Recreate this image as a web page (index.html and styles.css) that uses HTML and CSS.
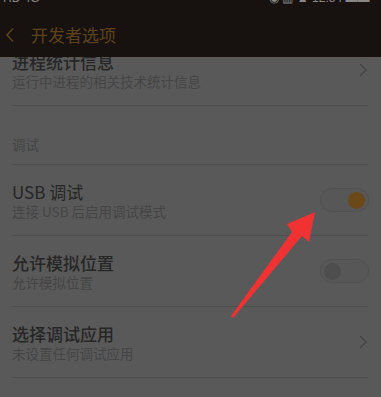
FILE: index.html
```html
<!DOCTYPE html>
<html lang="zh">
<head>
<meta charset="utf-8">
<link rel="stylesheet" href="styles.css">
</head>
<body>
<div class="screen">
  <header class="topbar">
    <div class="status">
      <span class="st-left">HD 4G</span>
      <span class="st-right">◉ ▥ ▲ 12:34 ▬▬ ▪</span>
    </div>
    <div class="nav">
      <svg class="back" width="10" height="16" viewBox="0 0 10 16"><path d="M8 1.5 L2 8 L8 14.5" fill="none" stroke="#5e4219" stroke-width="1.6"/></svg>
      <span class="title">开发者选项</span>
    </div>
  </header>

  <div class="list">
    <div class="row">
      <div class="texts">
        <div class="t">进程统计信息</div>
        <div class="s">运行中进程的相关技术统计信息</div>
      </div>
      <svg class="chev" width="8" height="14" viewBox="0 0 8 14"><path d="M1 1 L7 7 L1 13" fill="none" stroke="#444" stroke-width="1.2"/></svg>
    </div>
    <div class="section">调试</div>
    <div class="row">
      <div class="texts">
        <div class="t light">USB 调试</div>
        <div class="s">连接 USB 后启用调试模式</div>
      </div>
      <div class="toggle on"><span class="knob"></span></div>
    </div>
    <div class="row">
      <div class="texts">
        <div class="t">允许模拟位置</div>
        <div class="s">允许模拟位置</div>
      </div>
      <div class="toggle"><span class="knob"></span></div>
    </div>
    <div class="row">
      <div class="texts">
        <div class="t">选择调试应用</div>
        <div class="s">未设置任何调试应用</div>
      </div>
      <svg class="chev" width="8" height="14" viewBox="0 0 8 14"><path d="M1 1 L7 7 L1 13" fill="none" stroke="#444" stroke-width="1.2"/></svg>
    </div>
  </div>

  <svg class="arrow" width="381" height="397" viewBox="0 0 381 397">
    <polygon points="315,212 309,242 302,236 233,318 231,316 292,232 287,224" fill="#f03232"/>
  </svg>
</div>
</body>
</html>
```

FILE: styles.css
```css
html, body {
  margin: 0;
  padding: 0;
  background: #595959;
}
.screen {
  position: relative;
  width: 381px;
  height: 397px;
  overflow: hidden;
  background: #595959;
  font-family: "Noto Sans CJK SC", "Noto Sans", sans-serif;
}
.topbar {
  position: absolute;
  top: 0;
  left: 0;
  right: 0;
  height: 57px;
  background: #17120f;
  z-index: 2;
}
.status {
  height: 5px;
  overflow: hidden;
  display: flex;
  justify-content: space-between;
  padding: 0 4px 0 3px;
  color: #8a8784;
  font-family: "Liberation Sans", sans-serif;
  font-size: 12px;
  line-height: 12px;
}
.status span {
  margin-top: -8px;
}
.nav {
  display: flex;
  align-items: center;
  height: 52px;
  padding-left: 5px;
  gap: 16px;
  margin-top: 4px;
}
.title {
  color: #5e4219;
  font-size: 17px;
  line-height: 20px;
}
.list {
  padding-top: 35px;
}
.row {
  height: 70px;
  margin: 0 13px 0 12px;
  border-bottom: 1px solid #4e4e4e;
  display: flex;
  align-items: center;
  justify-content: space-between;
}
.texts {
  display: flex;
  flex-direction: column;
  padding-top: 1px;
}
.t {
  color: #262626;
  font-size: 17px;
  line-height: 21px;
  font-weight: 500;
}
.t.light {
  font-weight: 400;
}
.s {
  color: #454545;
  font-size: 13.5px;
  line-height: 19px;
}
.chev {
  margin-right: 1px;
}
.section {
  height: 59px;
  margin: 0 13px 0 12px;
  border-bottom: 1px solid #4e4e4e;
  color: #454545;
  font-size: 13.5px;
  display: flex;
  align-items: center;
  padding-top: 18px;
  box-sizing: border-box;
}
.toggle {
  width: 41px;
  height: 22px;
  border: 1px solid #515151;
  border-radius: 12px;
  background: #575757;
  display: flex;
  align-items: center;
  padding: 0 3px;
  box-sizing: content-box;
  margin-right: -1px;
}
.toggle .knob {
  width: 17px;
  height: 17px;
  border-radius: 50%;
  background: #4e4e4e;
}
.toggle.on {
  justify-content: flex-end;
}
.toggle.on .knob {
  background: #6a4818;
}
.arrow {
  position: absolute;
  top: 0;
  left: 0;
  z-index: 3;
}
```
